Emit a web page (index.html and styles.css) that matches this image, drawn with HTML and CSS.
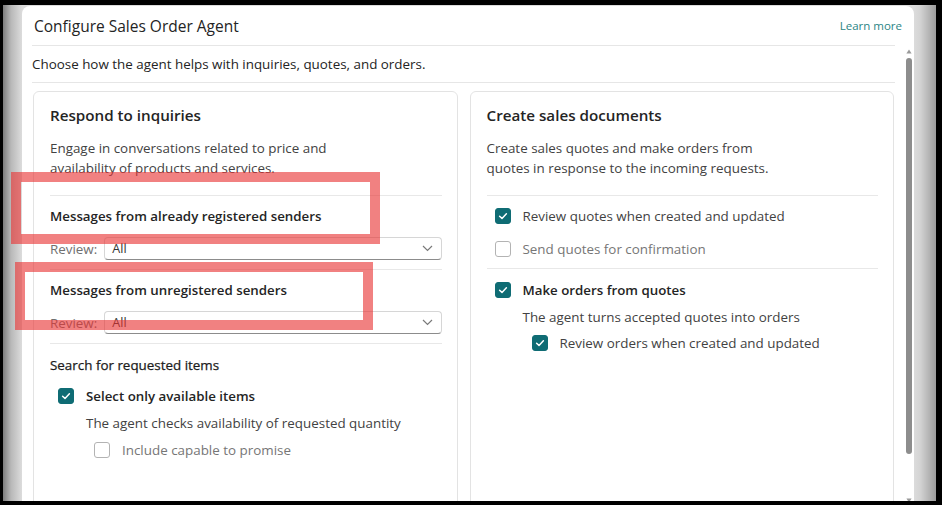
FILE: index.html
```html
<!DOCTYPE html>
<html lang="en">
<head>
<meta charset="utf-8">
<title>Configure Sales Order Agent</title>
<link rel="stylesheet" href="styles.css">
</head>
<body>
<div class="screen">
  <div class="stage">
    <div class="dialog">
      <div class="dlg-head">
        <span class="title">Configure Sales Order Agent</span>
        <a class="learn" href="#">Learn more</a>
      </div>
      <div class="rule head-rule"></div>
      <div class="dlg-body">
        <div class="content">
          <p class="intro">Choose how the agent helps with inquiries, quotes, and orders.</p>
          <div class="rule"></div>
          <div class="cards">
            <section class="card">
              <h2 class="card-title">Respond to inquiries</h2>
              <p class="card-desc">Engage in conversations related to price and<br>availability of products and services.</p>
              <div class="rule card-rule"></div>
              <div class="group">
                <div class="group-title">Messages from already registered senders</div>
                <div class="review-row">
                  <span class="review-label">Review:</span>
                  <div class="select"><span class="select-value">All</span>
                    <svg class="chev" width="11" height="7" viewBox="0 0 11 7"><path d="M1 1 L5.5 5.5 L10 1" fill="none" stroke="#7a7a7a" stroke-width="1.2"/></svg>
                  </div>
                </div>
              </div>
              <div class="rule card-rule r2"></div>
              <div class="group">
                <div class="group-title">Messages from unregistered senders</div>
                <div class="review-row">
                  <span class="review-label">Review:</span>
                  <div class="select"><span class="select-value">All</span>
                    <svg class="chev" width="11" height="7" viewBox="0 0 11 7"><path d="M1 1 L5.5 5.5 L10 1" fill="none" stroke="#7a7a7a" stroke-width="1.2"/></svg>
                  </div>
                </div>
              </div>
              <div class="rule card-rule r2"></div>
              <div class="search-title">Search for requested items</div>
              <div class="check-row ind1 mt11">
                <span class="cb on"><svg width="16" height="16" viewBox="0 0 16 16"><path d="M4.6 8.2 L7 10.4 L11.4 5.8" fill="none" stroke="#fff" stroke-width="1.5" stroke-linecap="round" stroke-linejoin="round"/></svg></span>
                <span class="check-label strong">Select only available items</span>
              </div>
              <p class="sub">The agent checks availability of requested quantity</p>
              <div class="check-row ind2 mt7">
                <span class="cb"></span>
                <span class="check-label muted">Include capable to promise</span>
              </div>
            </section>
            <section class="card">
              <h2 class="card-title">Create sales documents</h2>
              <p class="card-desc">Create sales quotes and make orders from<br>quotes in response to the incoming requests.</p>
              <div class="rule card-rule"></div>
              <div class="check-row ind1 mt10">
                <span class="cb on"><svg width="16" height="16" viewBox="0 0 16 16"><path d="M4.6 8.2 L7 10.4 L11.4 5.8" fill="none" stroke="#fff" stroke-width="1.5" stroke-linecap="round" stroke-linejoin="round"/></svg></span>
                <span class="check-label">Review quotes when created and updated</span>
              </div>
              <div class="check-row ind1 mt13">
                <span class="cb"></span>
                <span class="check-label muted">Send quotes for confirmation</span>
              </div>
              <div class="rule card-rule r3"></div>
              <div class="check-row ind1 mt11">
                <span class="cb on"><svg width="16" height="16" viewBox="0 0 16 16"><path d="M4.6 8.2 L7 10.4 L11.4 5.8" fill="none" stroke="#fff" stroke-width="1.5" stroke-linecap="round" stroke-linejoin="round"/></svg></span>
                <span class="check-label strong">Make orders from quotes</span>
              </div>
              <p class="sub">The agent turns accepted quotes into orders</p>
              <div class="check-row ind3 mt6">
                <span class="cb on"><svg width="16" height="16" viewBox="0 0 16 16"><path d="M4.6 8.2 L7 10.4 L11.4 5.8" fill="none" stroke="#fff" stroke-width="1.5" stroke-linecap="round" stroke-linejoin="round"/></svg></span>
                <span class="check-label">Review orders when created and updated</span>
              </div>
            </section>
          </div>
        </div>
        <div class="scrollbar">
          <svg class="sb-arrow" width="6" height="5" viewBox="0 0 6 5"><path d="M3 0.5 L5.6 4.5 L0.4 4.5 Z" fill="#9a9a9a"/></svg>
          <span class="thumb"></span>
          <svg class="sb-arrow down" width="6" height="5" viewBox="0 0 6 5"><path d="M0.4 0.5 L5.6 0.5 L3 4.5 Z" fill="#9a9a9a"/></svg>
        </div>
      </div>
    </div>
    <div class="mark mark1"></div>
    <div class="mark mark2"></div>
  </div>
</div>
</body>
</html>
```
FILE: styles.css
```css
* { box-sizing: border-box; }
html, body { margin: 0; padding: 0; background: #000; }
body { font-family: "Open Sans", "Noto Sans", sans-serif; color: #424242; }

.screen {
  width: 942px;
  height: 505px;
  background: #000;
  padding: 5px 6px 4px 3px;
  overflow: hidden;
}
.stage {
  position: relative;
  height: 100%;
  display: flex;
  align-items: flex-start;
  overflow: hidden;
  background: linear-gradient(to right, #7c7c7c 0px, #b8b8b8 8px, #d6d6d6 17px, #dcdcdc 19px, #dcdcdc calc(100% - 22px), #d4d4d4 calc(100% - 16px), #9c9c9c 100%);
}
.dialog {
  margin: 1px 0 0 19px;
  width: 892px;
  height: 495px;
  background: #fff;
  border-radius: 8px 8px 0 0;
  display: flex;
  flex-direction: column;
  overflow: hidden;
}
.dlg-head {
  height: 39px;
  flex: none;
  display: flex;
  align-items: center;
  justify-content: space-between;
  padding: 0 12px;
}
.title { font-size: 15.5px; color: #242424; }
.learn { font-size: 11.5px; color: #2b8585; text-decoration: none; }

.rule { height: 1px; background: #e6e6e6; flex: none; }
.head-rule { margin: 0 19px 0 10px; }

.dlg-body { flex: 1; display: flex; min-height: 0; }
.content { flex: 1; margin-left: 10px; min-width: 0; }
.intro { margin: 0; padding: 8px 0; font-size: 13.4px; line-height: 20px; color: #242424; }

.cards {
  display: grid;
  grid-template-columns: 1fr 1fr;
  gap: 12px;
  margin: 8px 1px 0 1px;
}
.card {
  border: 1px solid #e3e3e3;
  border-radius: 6px;
  padding: 12px 15px 0 16px;
  height: 470px;
}
.card-title { margin: 0; font-size: 15.2px; line-height: 22px; font-weight: 600; color: #242424; }
.card-desc { margin: 12px 0 0; font-size: 13.4px; line-height: 20px; color: #424242; }
.card-rule { margin-top: 17px; background: #e8e8e8; }
.card-rule.r2 { margin-top: 9px; }
.card-rule.r3 { margin-top: 9px; }

.group { padding-top: 10px; }
.group-title { font-size: 13.3px; line-height: 20px; font-weight: 600; color: #242424; }
.review-row { display: flex; align-items: center; gap: 7px; margin-top: 11px; }
.review-label { font-size: 13.4px; color: #707070; }
.select {
  flex: 1;
  height: 23px;
  border: 1px solid #d6d6d6;
  border-bottom-color: #8c8c8c;
  border-radius: 4px;
  display: flex;
  align-items: center;
  justify-content: space-between;
  padding: 0 8px 0 7px;
}
.select-value { font-size: 12.6px; color: #333; }

.search-title { margin-top: 11px; font-size: 13.4px; line-height: 20px; color: #1c1c1c; -webkit-text-stroke: 0.25px #1c1c1c; }

.check-row { display: flex; align-items: center; gap: 12px; height: 20px; }
.ind1 { margin-left: 8px; }
.ind2 { margin-left: 44px; }
.ind3 { margin-left: 45px; }
.mt6 { margin-top: 6px; }
.mt7 { margin-top: 7px; }
.mt10 { margin-top: 10px; }
.mt11 { margin-top: 11px; }
.mt13 { margin-top: 13px; }
.cb {
  width: 16px; height: 16px; flex: none;
  border: 1px solid #b3b3b3;
  border-radius: 3px;
  background: #fff;
  display: flex;
}
.cb.on { background: #0f6c74; border-color: #0f6c74; }
.cb svg { margin: -1px; }
.check-label { font-size: 13.4px; line-height: 20px; color: #424242; }
.check-label.strong { font-size: 13.3px; font-weight: 600; color: #242424; }
.check-label.muted { color: #767676; }
.sub { margin: 7px 0 0 36px; font-size: 13.4px; line-height: 20px; color: #424242; }

.scrollbar {
  width: 11px;
  margin-left: 8px;
  display: flex;
  flex-direction: column;
  align-items: center;
  padding-top: 3px;
}
.sb-arrow { flex: none; }
.thumb { width: 6px; height: 396px; margin-top: 4px; border-radius: 3px; background: #8d8d8d; }
.sb-arrow.down { margin-top: auto; margin-bottom: -2px; }

.mark {
  position: absolute;
  border: 10px solid rgba(232, 52, 52, 0.62);
}
.mark1 { left: 8px; top: 167px; width: 369px; height: 72px; }
.mark2 { left: 12px; top: 257px; width: 358px; height: 68px; }
```
